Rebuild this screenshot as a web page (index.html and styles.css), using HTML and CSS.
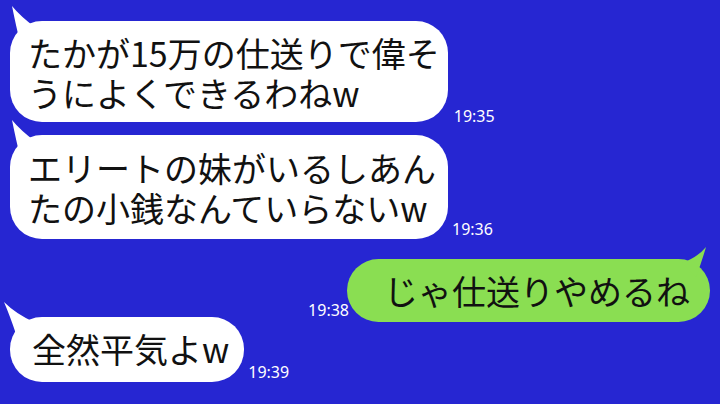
FILE: index.html
```html
<!DOCTYPE html>
<html lang="ja">
<head>
<meta charset="utf-8">
<link rel="stylesheet" href="styles.css">
</head>
<body>
<div class="chat">
  <div class="row row-1">
    <div class="bubble in b1">
      <svg class="tail tail-in" width="30" height="36" viewBox="0 0 30 36"><path d="M2 0 Q10 10 26 22 L10 36 Q6 20 2 0 Z"/></svg>
      <span class="line">たかが15万の仕送りで偉そ</span>
      <span class="line">うによくできるわねw</span>
    </div>
    <span class="time">19:35</span>
  </div>
  <div class="row row-2">
    <div class="bubble in b2">
      <svg class="tail tail-in" width="30" height="36" viewBox="0 0 30 36"><path d="M2 0 Q10 10 26 22 L10 36 Q6 20 2 0 Z"/></svg>
      <span class="line">エリートの妹がいるしあん</span>
      <span class="line">たの小銭なんていらないw</span>
    </div>
    <span class="time">19:36</span>
  </div>
  <div class="row row-3">
    <span class="time">19:38</span>
    <div class="bubble out b3">
      <svg class="tail tail-out" width="30" height="30" viewBox="0 0 30 30"><path d="M26 0 Q18 10 2 16 L16 30 Q22 14 26 0 Z"/></svg>
      <span class="line">じゃ仕送りやめるね</span>
    </div>
  </div>
  <div class="row row-4">
    <div class="bubble in b4">
      <svg class="tail tail-in4" width="32" height="32" viewBox="0 0 32 32"><path d="M0 0 Q12 12 30 20 L12 32 Q6 14 0 0 Z"/></svg>
      <span class="line">全然平気よw</span>
    </div>
    <span class="time">19:39</span>
  </div>
</div>
</body>
</html>
```

FILE: styles.css
```css
html, body {
  margin: 0;
  padding: 0;
}
body {
  width: 720px;
  height: 404px;
  overflow: hidden;
  background: #2626d2;
  font-family: "Noto Sans CJK JP", "Noto Sans", sans-serif;
}
.chat {
  display: flex;
  flex-direction: column;
  padding: 21px 10px 0 10px;
}
.row {
  display: flex;
  align-items: flex-end;
}
.row-2 { margin-top: 13px; }
.row-3 { margin-top: 20px; justify-content: flex-end; }
.row-4 { margin-top: -5px; }

.bubble {
  position: relative;
  display: flex;
  flex-direction: column;
  font-size: 34px;
  line-height: 40px;
  color: #111;
  white-space: nowrap;
  border-radius: 32px;
}
.line {
  display: block;
  height: 40px;
}
.bubble.in { background: #fff; }
.bubble.out { background: #8ade52; }

.b1 { padding: 12px 8px 9px 18px; }
.b2 { padding: 13px 12px 11px 18px; }
.b3 { padding: 12px 20px 11px 37px; }
.b4 { padding: 12px 15px 13px 22px; }

.tail {
  position: absolute;
}
.tail-in {
  left: 0;
  top: -15px;
  fill: #fff;
}
.tail-out {
  right: 0;
  top: -12px;
  fill: #8ade52;
}
.tail-in4 {
  left: -6px;
  top: -15px;
  fill: #fff;
}

.time {
  font-family: "Noto Sans", sans-serif;
  font-size: 16px;
  line-height: 16px;
  color: #fff;
}
.row-1 .time { margin: 0 0 -2px 6px; }
.row-2 .time { margin: 0 0 2px 4px; }
.row-3 .time { margin: 0 -2px 4px 0; }
.row-4 .time { margin: 0 0 2px 4px; }
```
